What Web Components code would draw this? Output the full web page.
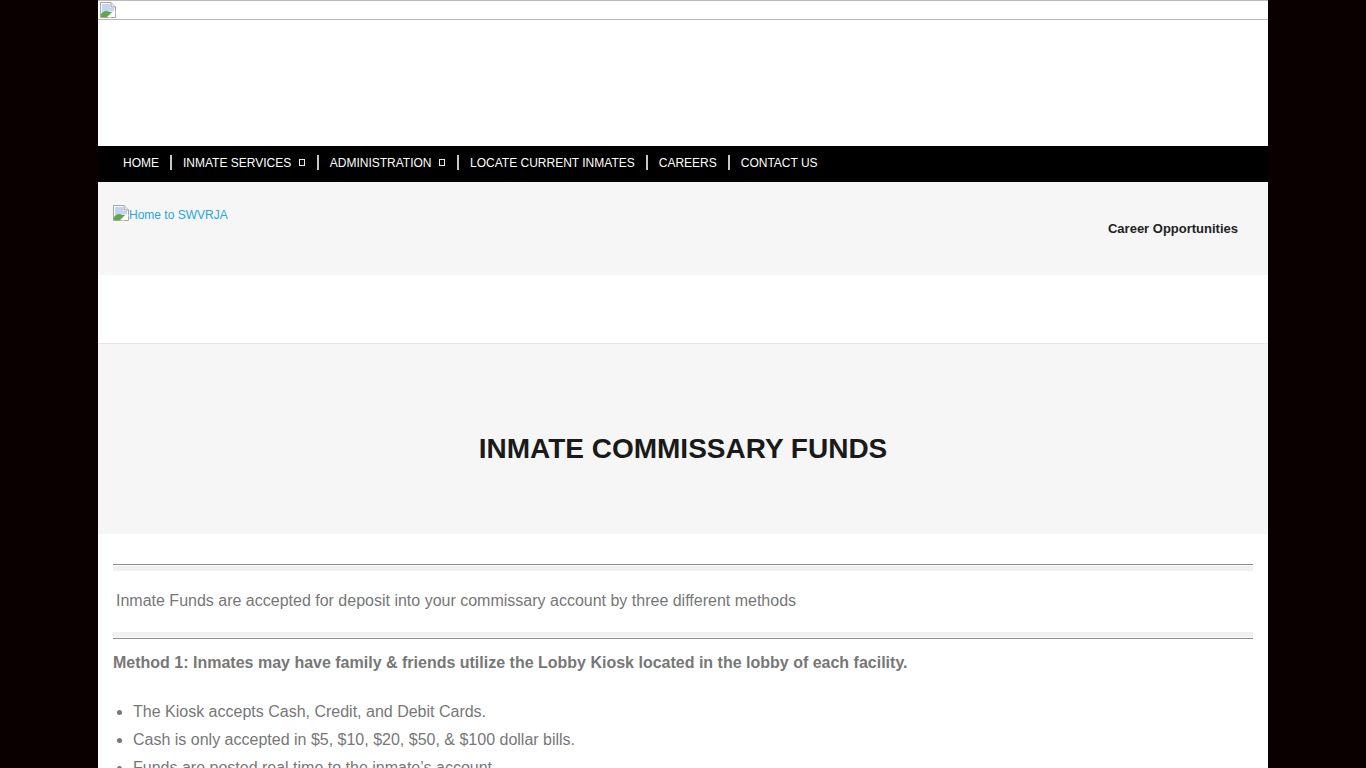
<!DOCTYPE html>
<html lang="en">
<head>
<meta charset="utf-8">
<title>Inmate Commissary Funds</title>
<style>
  html, body { margin: 0; height: 768px; overflow: hidden; background: #0a0000; }
  body { font-family: "Liberation Sans", Arial, sans-serif; }
</style>
</head>
<body>

<template id="broken-img-tpl">
  <style>
    :host { display: inline-block; width: 16px; height: 16px; line-height: 0; }
    svg { display: block; }
  </style>
  <svg width="16" height="16" viewBox="0 0 16 16">
    <path d="M.5.5h10.500l4.500 4.500v10.500H.5z" fill="#fff" stroke="#a6a6a6"/>
    <path d="M11 .5v4.500h4.500" fill="#e4e4e4" stroke="#a6a6a6"/>
    <path d="M2 2h8v4h4v3L2 11z" fill="#c3d5f2"/>
    <path d="M1 15v-3c3-3 5-3.500 7-2.500 1.500.7 3 .7 4.500.3L7 15z" fill="#5fa843"/>
    <path d="M8 15.500l7.500-6v1.500L11 15.500z" fill="#fff"/>
  </svg>
</template>

<script>
// every element here just clones or sets its own shadow markup
class BrokenImg extends HTMLElement {
  connectedCallback() {
    const shadow = this.attachShadow({ mode: "open" });
    shadow.appendChild(document.getElementById("broken-img-tpl").content.cloneNode(true));
  }
}
customElements.define("broken-img", BrokenImg);

class TopBanner extends HTMLElement {
  connectedCallback() {
    const shadow = this.attachShadow({ mode: "open" });
    shadow.innerHTML = `
    <style>
      :host { display: block; height: 146px; background: #fff; }
      .frame { height: 18px; border-top: 1px solid #b9b9b9; border-bottom: 1px solid #b9b9b9; padding-left: 2px; }
      broken-img { margin-top: 1px; }
    </style>
    <div class="frame"><broken-img></broken-img></div>`;
  }
}
customElements.define("top-banner", TopBanner);

class NavBar extends HTMLElement {
  connectedCallback() {
    const shadow = this.attachShadow({ mode: "open" });
    shadow.innerHTML = `
    <style>
      :host { display: flex; align-items: flex-start; height: 27px; background: #000; padding: 9px 0 0 14px; }
    </style>
    <slot></slot>`;
  }
}
customElements.define("nav-bar", NavBar);

class NavItem extends HTMLElement {
  connectedCallback() {
    const shadow = this.attachShadow({ mode: "open" });
    const caret = this.hasAttribute("menu") ? `<span class="box"></span>` : "";
    shadow.innerHTML = `
    <style>
      :host { display: flex; align-items: flex-start; height: 15px; padding: 0 11px; border-right: 2px solid #c8c8c8; color: #fff; font-size: 12px; line-height: 17px; }
      :host([last]) { border-right: 0; }
      .box { display: inline-block; box-sizing: border-box; width: 6px; height: 7px; border: 1px solid #e8e8f0; margin: 4px 1px 0 7.5px; }
    </style>
    <slot></slot>${caret}`;
  }
}
customElements.define("nav-item", NavItem);

class HomeStrip extends HTMLElement {
  connectedCallback() {
    const shadow = this.attachShadow({ mode: "open" });
    shadow.innerHTML = `
    <style>
      :host { display: flex; justify-content: space-between; height: 93px; background: #f6f6f6; padding: 0 30px 0 15px; }
      .home { display: flex; align-items: flex-start; height: 16px; margin-top: 23px; color: #27a7d8; font-size: 12px; line-height: 20px; }
      .career { margin-top: 39px; color: #222; font-size: 13px; font-weight: bold; line-height: 16px; }
    </style>
    <div class="home"><broken-img></broken-img><span>Home to SWVRJA</span></div>
    <div class="career">Career Opportunities</div>`;
  }
}
customElements.define("home-strip", HomeStrip);

class PageTitle extends HTMLElement {
  connectedCallback() {
    const shadow = this.attachShadow({ mode: "open" });
    shadow.innerHTML = `
    <style>
      :host { display: flex; align-items: center; justify-content: center; height: 190px; margin-top: 68px; background: #f6f6f6; border-top: 1px solid #e6e6e6; }
      h1 { margin: 0 0 -20px; font-size: 28px; line-height: 34px; font-weight: bold; color: #1a1a1a; }
    </style>
    <h1><slot></slot></h1>`;
  }
}
customElements.define("page-title", PageTitle);

class FancyRule extends HTMLElement {
  connectedCallback() {
    const shadow = this.attachShadow({ mode: "open" });
    shadow.innerHTML = `
    <style>
      :host { display: block; height: 7px; box-sizing: border-box; border-top: 1px solid #8c8c8c; }
      :host([flip]) { border-top: 0; border-bottom: 1px solid #8c8c8c; }
      div { height: 5px; margin-top: 1px; background: #f0f0f0; }
      :host([flip]) div { margin-top: 0; }
    </style>
    <div></div>`;
  }
}
customElements.define("fancy-rule", FancyRule);

class ContentArea extends HTMLElement {
  connectedCallback() {
    const shadow = this.attachShadow({ mode: "open" });
    shadow.innerHTML = `
    <style>
      :host { display: block; padding: 30px 15px 0; color: #777; font-size: 16px; }
      .intro { margin: 21px 0 22px; padding-left: 3px; line-height: 18px; }
      .method { margin: 15px 0 0; font-weight: bold; line-height: 18px; }
      ul { margin: 26px 0 0; padding-left: 20px; }
      li { line-height: 28px; }
    </style>
    <fancy-rule></fancy-rule>
    <p class="intro">Inmate Funds are accepted for deposit into your commissary account by three different methods</p>
    <fancy-rule flip></fancy-rule>
    <p class="method">Method 1: Inmates may have family &amp; friends utilize the Lobby Kiosk located in the lobby of each facility.</p>
    <ul>
      <li>The Kiosk accepts Cash, Credit, and Debit Cards.</li>
      <li>Cash is only accepted in $5, $10, $20, $50, &amp; $100 dollar bills.</li>
      <li>Funds are posted real time to the inmate’s account.</li>
    </ul>`;
  }
}
customElements.define("content-area", ContentArea);

class PageShell extends HTMLElement {
  connectedCallback() {
    const shadow = this.attachShadow({ mode: "open" });
    shadow.innerHTML = `
    <style>
      :host { display: block; width: 1170px; height: 768px; margin: 0 auto; background: #fff; overflow: hidden; }
    </style>
    <slot></slot>`;
  }
}
customElements.define("page-shell", PageShell);
</script>

<page-shell>
  <top-banner></top-banner>
  <nav-bar>
    <nav-item>HOME</nav-item>
    <nav-item menu>INMATE SERVICES</nav-item>
    <nav-item menu>ADMINISTRATION</nav-item>
    <nav-item>LOCATE CURRENT INMATES</nav-item>
    <nav-item>CAREERS</nav-item>
    <nav-item last>CONTACT US</nav-item>
  </nav-bar>
  <home-strip></home-strip>
  <page-title>INMATE COMMISSARY FUNDS</page-title>
  <content-area></content-area>
</page-shell>
</body>
</html>
